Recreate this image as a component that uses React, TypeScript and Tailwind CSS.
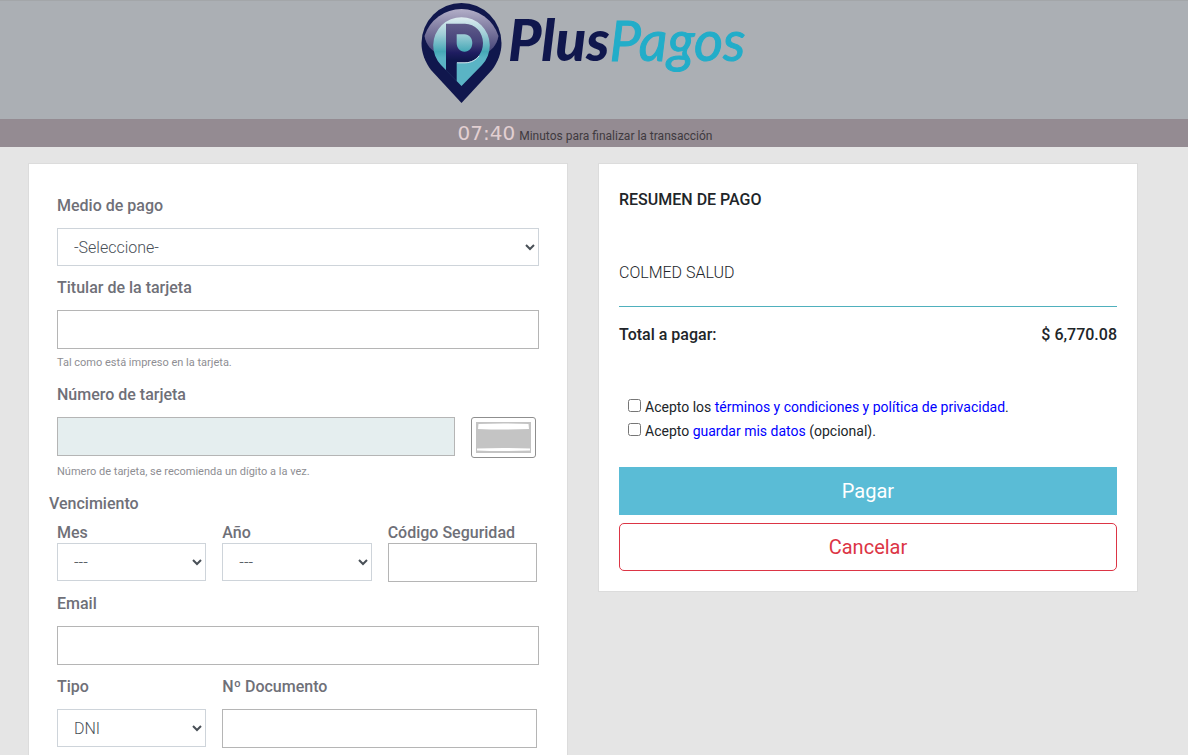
import { useState } from 'react';
import type { ReactNode } from 'react';
import clsx from 'clsx';

const inputClass = 'block h-[39px] w-full border border-[#b5b5b5] bg-white px-4 text-base text-[#495057] outline-none';
const selectClass = 'block h-[38px] w-full border border-[#ced4da] bg-white pr-0 pl-3 text-base font-light text-[#495057] outline-none';

const MONTHS = ['01', '02', '03', '04', '05', '06', '07', '08', '09', '10', '11', '12'];
const YEARS = ['2021', '2022', '2023', '2024', '2025', '2026', '2027', '2028'];

function Field({ id, label, hint, tight, children }: { id: string; label: string; hint?: string; tight?: boolean; children: ReactNode }) {
  return (
    <div>
      <label htmlFor={id} className={clsx('block text-base font-medium text-[#6f7078]', tight ? 'leading-5' : 'mb-2.5')}>{label}</label>
      {children}
      {hint && <p className="mt-1.5 mb-0.5 text-[11px] leading-4 text-[#8e8e93]">{hint}</p>}
    </div>
  );
}

function Logo() {
  return (
    <svg width="352" height="104" viewBox="0 1 352 104" role="img" aria-label="PlusPagos">
      <defs>
        <linearGradient id="gloss" x1="0" y1="0" x2="0" y2="1">
          <stop offset="0" stopColor="#b3afc8" />
          <stop offset="0.35" stopColor="#8581a5" />
          <stop offset="1" stopColor="#33326a" />
        </linearGradient>
        <linearGradient id="disc" gradientUnits="userSpaceOnUse" x1="0" y1="15" x2="0" y2="58">
          <stop offset="0" stopColor="#e6f0f3" />
          <stop offset="0.45" stopColor="#a0ced7" />
          <stop offset="0.85" stopColor="#45a8b6" />
          <stop offset="1" stopColor="#5ab4c5" />
        </linearGradient>
        <linearGradient id="letter" gradientUnits="userSpaceOnUse" x1="0" y1="23" x2="0" y2="60">
          <stop offset="0" stopColor="#625d8b" />
          <stop offset="0.5" stopColor="#46437a" />
          <stop offset="0.8" stopColor="#1f1d61" />
          <stop offset="1" stopColor="#10174d" />
        </linearGradient>
      </defs>
      <path d="M43.5 103 L13 70 C7 62 3.5 53 3.5 43 A40 40 0 0 1 83.5 43 C83.5 53 80 62 74 70 Z" fill="#10174d" />
      <path d="M6.5 36 A38.8 38.8 0 0 1 80.5 36 C79 45 73 51 66 55 C50 61 36 61 21 55 C14 51 8 45 6.5 36 Z" fill="url(#gloss)" />
      <path d="M43.5 86 L23 65 A28.3 28.3 0 1 1 64 65 Z" fill="url(#disc)" />
      <path d="M28 23.7 H47 C57 23.7 65 32 65 43 C65 54 57 62.5 47 62.5 H38.7 V81.2 L28 70.5 Z" fill="url(#letter)" />
      <path d="M39 62.8 H47 C53 62.8 58 60 61 56" fill="none" stroke="#d5dfe9" strokeWidth="1" />
      <path d="M38.7 34.3 H46.5 C51 34.3 54.3 38 54.3 43 C54.3 48 51 51.7 46.5 51.7 C42 51.7 38.7 48 38.7 43 Z" fill="url(#disc)" />
      <text x="90" y="61" fontFamily="Lato, sans-serif" fontStyle="italic" fontSize="57">
        <tspan fontWeight="900" fill="#10174d">Plus</tspan>
        <tspan fontWeight="400" fontSize="56" fill="#22adc9" stroke="#22adc9" strokeWidth="1">Pagos</tspan>
      </text>
    </svg>
  );
}

function CardPreview() {
  return (
    <svg width="65" height="41" viewBox="0 0 65 41" className="shrink-0" aria-hidden="true">
      <rect x="0.5" y="0.5" width="64" height="40" rx="2.5" fill="#fff" stroke="#8f8f8f" />
      <rect x="5" y="5" width="55" height="31" fill="#c4c4c4" />
      <path d="M7.500 7 Q32 6 57.500 7 L58 12 Q32 13 7 12 Z" fill="#fff" />
      <path d="M6 31.5 Q32 30.5 59 31.5 V33.5 Q32 34.5 6 33.5 Z" fill="#fff" />
    </svg>
  );
}

function PaymentForm() {
  return (
    <form className="flex flex-col gap-2.5 border border-[#dcdcdc] bg-white px-7 pt-[30px] pb-7">
      <Field id="medio" label="Medio de pago">
        <select id="medio" className={selectClass}>
          <option>-Seleccione-</option>
          <option>Tarjeta de crédito</option>
          <option>Tarjeta de débito</option>
        </select>
      </Field>
      <Field id="titular" label="Titular de la tarjeta" hint="Tal como está impreso en la tarjeta.">
        <input id="titular" type="text" className={inputClass} />
      </Field>
      <Field id="numero" label="Número de tarjeta" hint="Número de tarjeta, se recomienda un dígito a la vez.">
        <div className="flex items-start gap-4 pr-[3px]">
          <input id="numero" type="text" className="h-[39px] min-w-0 flex-1 border border-[#b5b5b5] bg-[#e5eeef] px-4 outline-none" />
          <CardPreview />
        </div>
      </Field>
      <fieldset>
        <legend className="-ml-2 text-base font-medium text-[#6f7078]">Vencimiento</legend>
        <div className="mt-[7px] grid grid-cols-3 gap-4 pr-0.5">
          <Field id="mes" label="Mes" tight>
            <select id="mes" className={selectClass}>
              <option>---</option>
              {MONTHS.map((m) => <option key={m}>{m}</option>)}
            </select>
          </Field>
          <Field id="anio" label="Año" tight>
            <select id="anio" className={selectClass}>
              <option>---</option>
              {YEARS.map((y) => <option key={y}>{y}</option>)}
            </select>
          </Field>
          <Field id="codigo" label="Código Seguridad" tight>
            <input id="codigo" type="text" className={inputClass} />
          </Field>
        </div>
      </fieldset>
      <Field id="email" label="Email">
        <input id="email" type="email" className={inputClass} />
      </Field>
      <div className="grid grid-cols-3 gap-4 pr-0.5">
        <Field id="tipo" label="Tipo">
          <select id="tipo" className={selectClass}>
            <option>DNI</option>
            <option>CUIT</option>
          </select>
        </Field>
        <div className="col-span-2">
          <Field id="documento" label="Nº Documento">
            <input id="documento" type="text" className={inputClass} />
          </Field>
        </div>
      </div>
    </form>
  );
}

function Summary() {
  const [terms, setTerms] = useState(false);
  const [save, setSave] = useState(false);

  return (
    <section className="border border-[#dcdcdc] bg-white px-5 pt-6 pb-5 text-[#212529]">
      <h2 className="text-base font-medium">RESUMEN DE PAGO</h2>
      <p className="mt-[49px] text-base font-light">COLMED SALUD</p>
      <hr className="mt-[21px] h-px border-0 bg-[#4fb0bd]" />
      <div className="mt-4 flex justify-between text-base font-medium">
        <span>Total a pagar:</span>
        <span>$ 6,770.08</span>
      </div>
      <div className="mt-12 pl-[9px] text-sm leading-6">
        <div className="flex items-baseline gap-1">
          <input id="terms" type="checkbox" checked={terms} onChange={(e) => setTerms(e.target.checked)} className="size-[13px]" />
          <label htmlFor="terms">
            Acepto los <a href="#terminos" className="text-[#0000ff]">términos y condiciones y política de privacidad</a>.
          </label>
        </div>
        <div className="flex items-baseline gap-1">
          <input id="save" type="checkbox" checked={save} onChange={(e) => setSave(e.target.checked)} className="size-[13px]" />
          <label htmlFor="save">
            Acepto <a href="#datos" className="text-[#0000ff]">guardar mis datos</a> (opcional).
          </label>
        </div>
      </div>
      <button type="button" className="mt-6 block h-12 w-full bg-[#5abcd6] text-xl text-white">Pagar</button>
      <button type="button" className="mt-2 block h-12 w-full rounded-[5px] border border-[#dc3545] text-xl text-[#dc3545]">Cancelar</button>
    </section>
  );
}

export default function App() {
  return (
    <div className="min-h-screen bg-[#e5e5e5] font-['Roboto',sans-serif]">
      <header className="flex justify-center border-t border-[#a3a6a9] bg-[#abafb4] pb-[14px]">
        <Logo />
      </header>
      <div className="flex h-7 items-baseline justify-center gap-1 bg-[#948b92] pr-[18px] leading-7">
        <span className="font-['DejaVu_Sans',sans-serif] text-[20px] text-[#e2cfd1]">07:40</span>
        <span className="text-xs text-[#3f3a40]">Minutos para finalizar la transacción</span>
      </div>
      <main className="grid grid-cols-2 items-start gap-[30px] pt-4 pr-[50px] pl-7">
        <PaymentForm />
        <Summary />
      </main>
    </div>
  );
}
